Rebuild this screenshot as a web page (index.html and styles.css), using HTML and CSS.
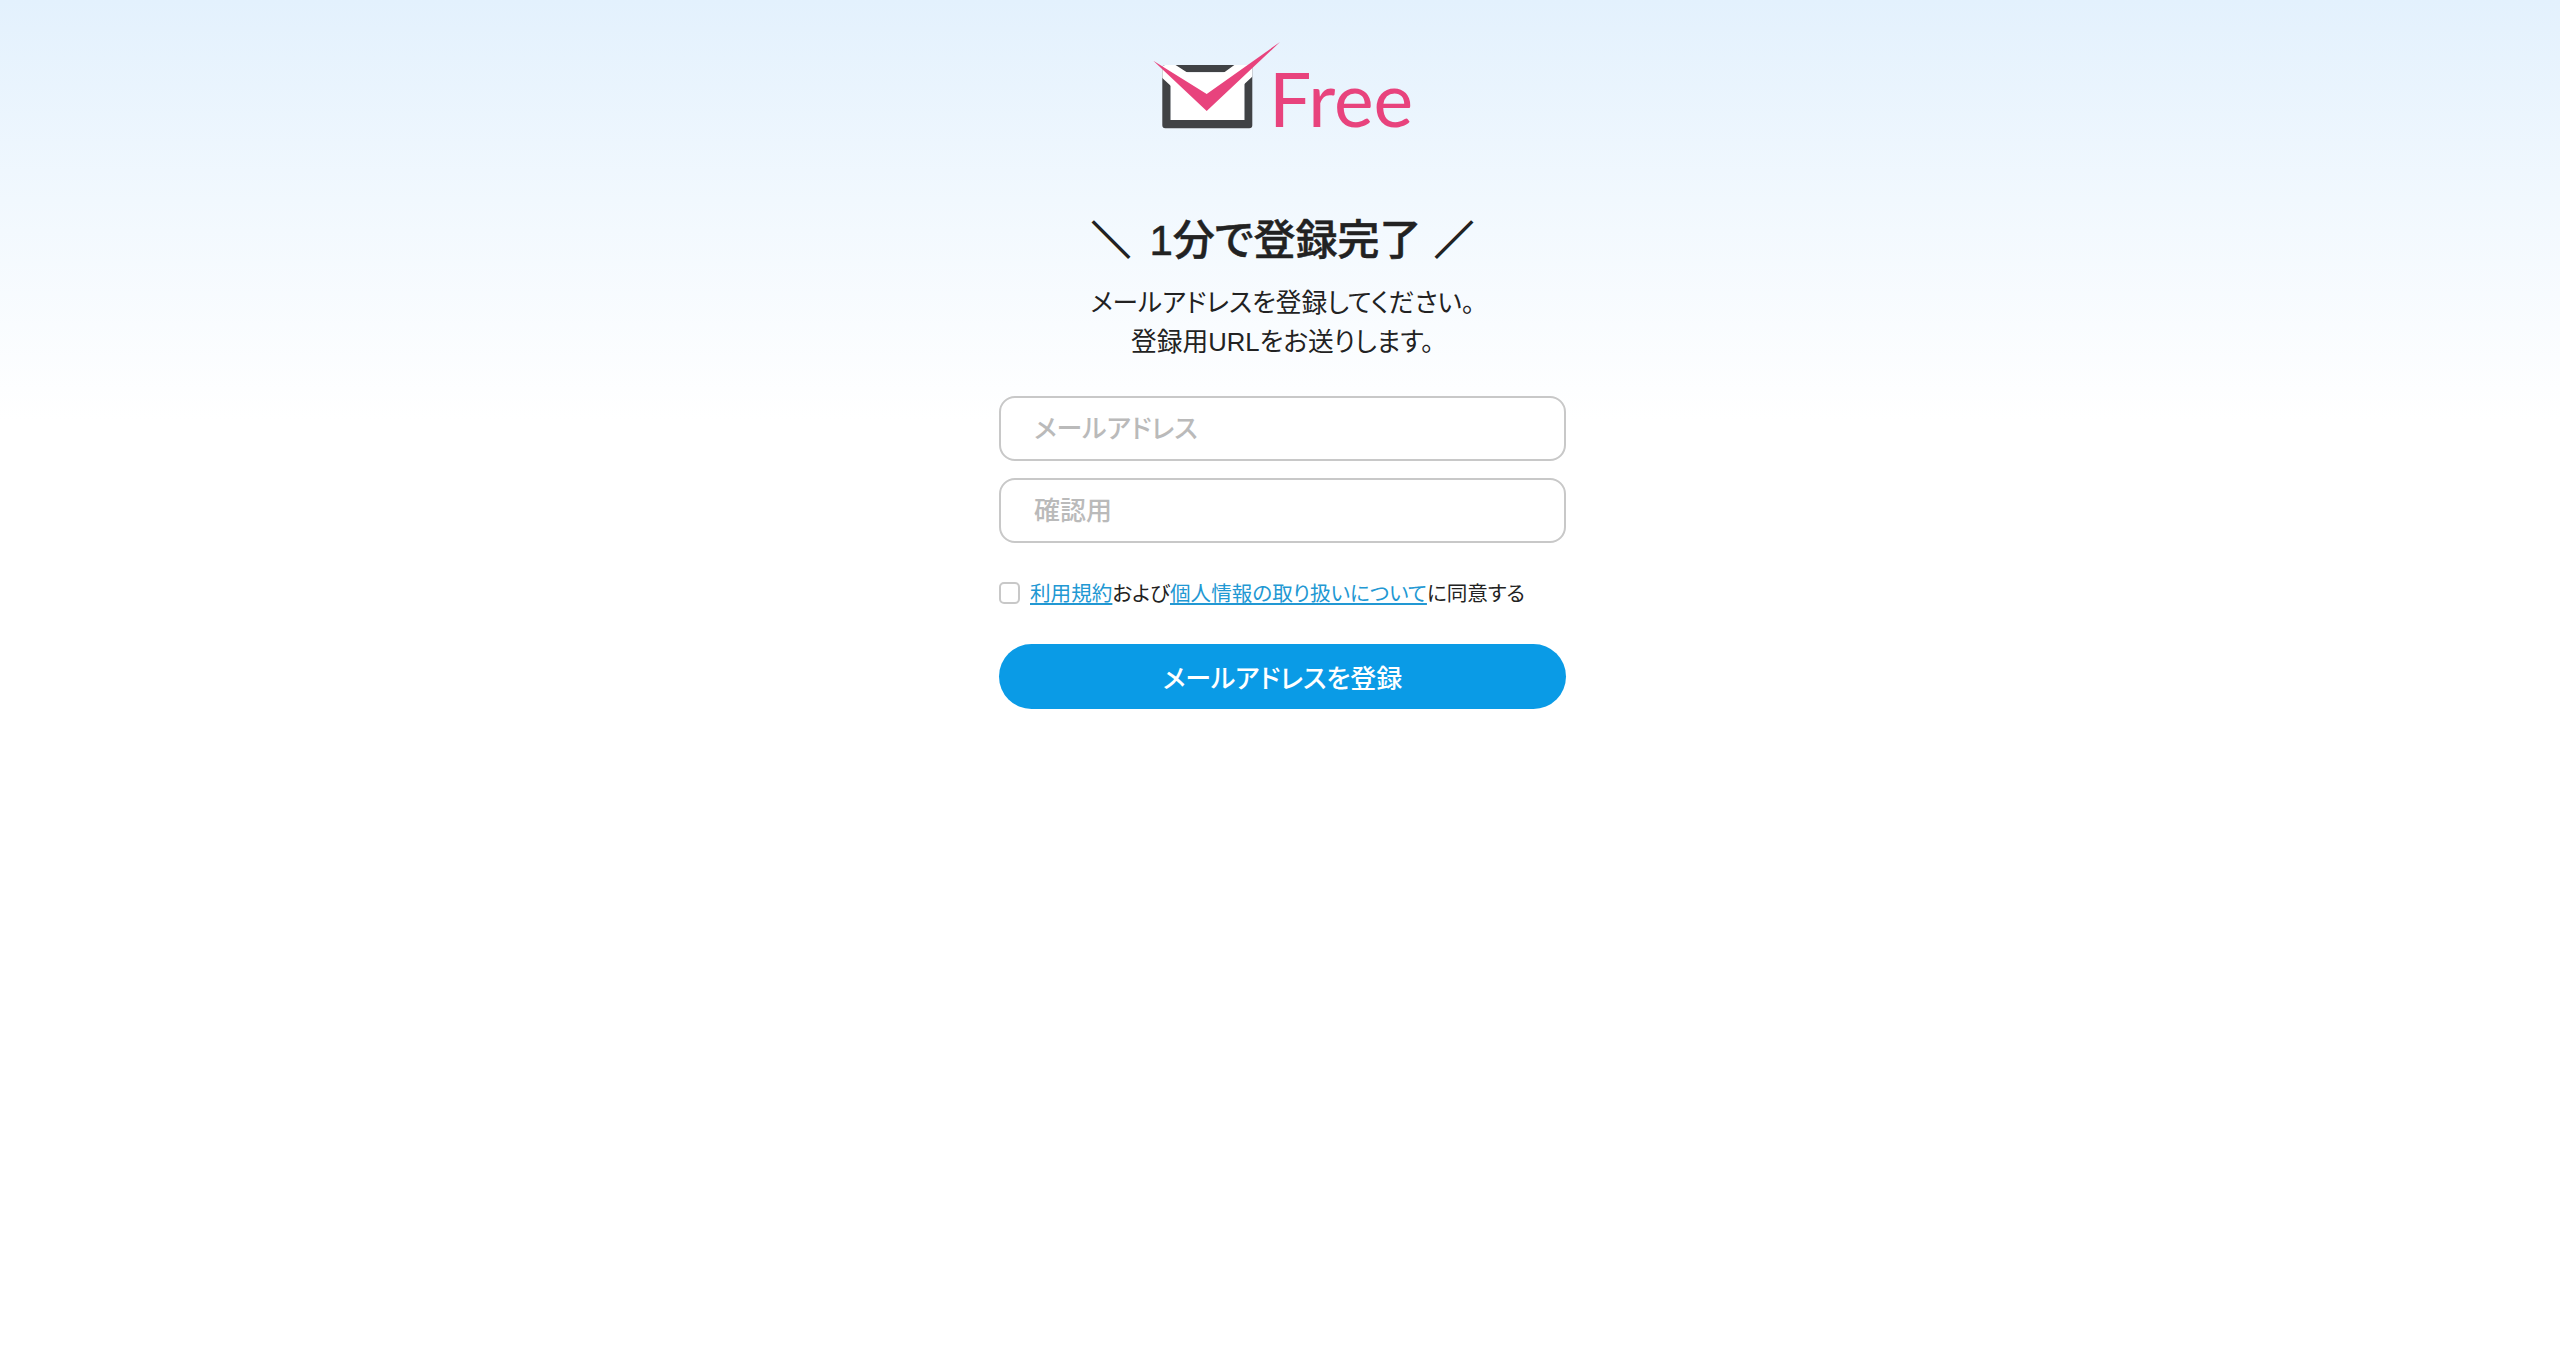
FILE: index.html
```html
<!DOCTYPE html>
<html lang="ja">
<head>
<meta charset="utf-8">
<title>1分で登録完了</title>
<link rel="stylesheet" href="styles.css">
</head>
<body>
<main class="page">
  <div class="logo">
    <svg class="logo-mark" viewBox="0 0 135 95" width="135" height="95" aria-hidden="true">
      <defs><clipPath id="env"><rect x="12.3" y="25" width="90" height="63.3" rx="3"/></clipPath></defs>
      <path d="M15.3 25 H99.3 a3 3 0 0 1 3 3 V85.3 a3 3 0 0 1-3 3 H15.3 a3 3 0 0 1-3-3 V28 a3 3 0 0 1 3-3 Z M20.7 32.3 V80 H94.3 V32.3 Z" fill="#404245" fill-rule="evenodd"/>
      <rect x="20.7" y="32.3" width="73.6" height="47.7" fill="#fff"/>
      <path d="M3.3 10.7 L56.7 45 L130 -8 V11 L56.7 79 L3.3 29.7 Z" fill="#fff" clip-path="url(#env)"/>
      <path d="M3.3 20.7 L56.7 54 L130 2 L56.7 71 Z" fill="#e8437d"/>
    </svg>
    <span class="logo-word">Free</span>
  </div>
  <h1 class="title"><span class="slash">＼</span><span class="title-text">1分で登録完了</span><span class="slash">／</span></h1>
  <p class="lead">メールアドレスを登録してください。<br>登録用URLをお送りします。</p>
  <form class="form">
    <input class="field" type="email" placeholder="メールアドレス">
    <input class="field" type="text" placeholder="確認用">
    <label class="agree">
      <input class="check" type="checkbox">
      <span><a href="#">利用規約</a>および<a href="#">個人情報の取り扱いについて</a>に同意する</span>
    </label>
    <button class="submit" type="button">メールアドレスを登録</button>
  </form>
</main>
</body>
</html>
```
FILE: styles.css
```css
* { box-sizing: border-box; }
html, body { margin: 0; height: 100%; }
body {
  min-height: 1365px;
  background: linear-gradient(#e3f1fd 0, #f1f8fe 200px, #ffffff 420px);
  color: #222;
  font-family: "Liberation Sans", "Noto Sans CJK JP", sans-serif;
  font-feature-settings: "palt";
}
.page {
  display: flex;
  flex-direction: column;
  align-items: center;
  padding-top: 40px;
  padding-left: 5px;
}
.logo {
  display: flex;
  align-items: flex-start;
  height: 95px;
  width: 265px;
}
.logo-mark { flex: none; display: block; }
.logo-word {
  font-family: Lato, sans-serif;
  font-size: 75px;
  line-height: 76px;
  color: #e8437d;
  margin-left: -16px;
  margin-top: 20px;
}
.title {
  display: flex;
  align-items: center;
  justify-content: center;
  gap: 16px;
  margin: 78px 0 0;
  font-size: 42px;
  line-height: 56px;
  font-weight: 500;
  color: #222;
}
.title-text {
  margin: 0 -3px 0 3px;
  -webkit-text-stroke: 0.5px #222;
}
.slash {
  font-size: 39px;
  font-weight: 700;
  -webkit-text-stroke: 1.4px #222;
}
.lead {
  margin: 15px 0 0;
  font-size: 25.7px;
  line-height: 39px;
  text-align: center;
  color: #222;
}
.form {
  display: flex;
  flex-direction: column;
  width: 567px;
  margin-top: 34px;
}
.field {
  height: 65px;
  padding: 2px 33px 0;
  border: 2px solid #c8c8c8;
  border-radius: 16px;
  background: #fff;
  font: inherit;
  font-size: 26px;
  margin-bottom: 17px;
  outline: none;
}
.field::placeholder { color: #bababa; opacity: 1; font-weight: 500; }
.agree {
  display: flex;
  align-items: center;
  gap: 10px;
  margin-top: 15px;
  height: 34px;
  font-size: 20.6px;
  color: #222;
}
.check {
  appearance: none;
  flex: none;
  width: 21px;
  height: 22px;
  margin: 2px 0 0;
  background: #fff;
  border: 2px solid #c8c8c8;
  border-radius: 5px;
}
.agree a { color: #2298d3; text-decoration: underline; }
.submit {
  height: 65px;
  margin-top: 35px;
  border: 0;
  border-radius: 33px;
  background: #0a9be6;
  color: #fff;
  font: inherit;
  font-size: 26px;
  font-weight: 500;
}
```
